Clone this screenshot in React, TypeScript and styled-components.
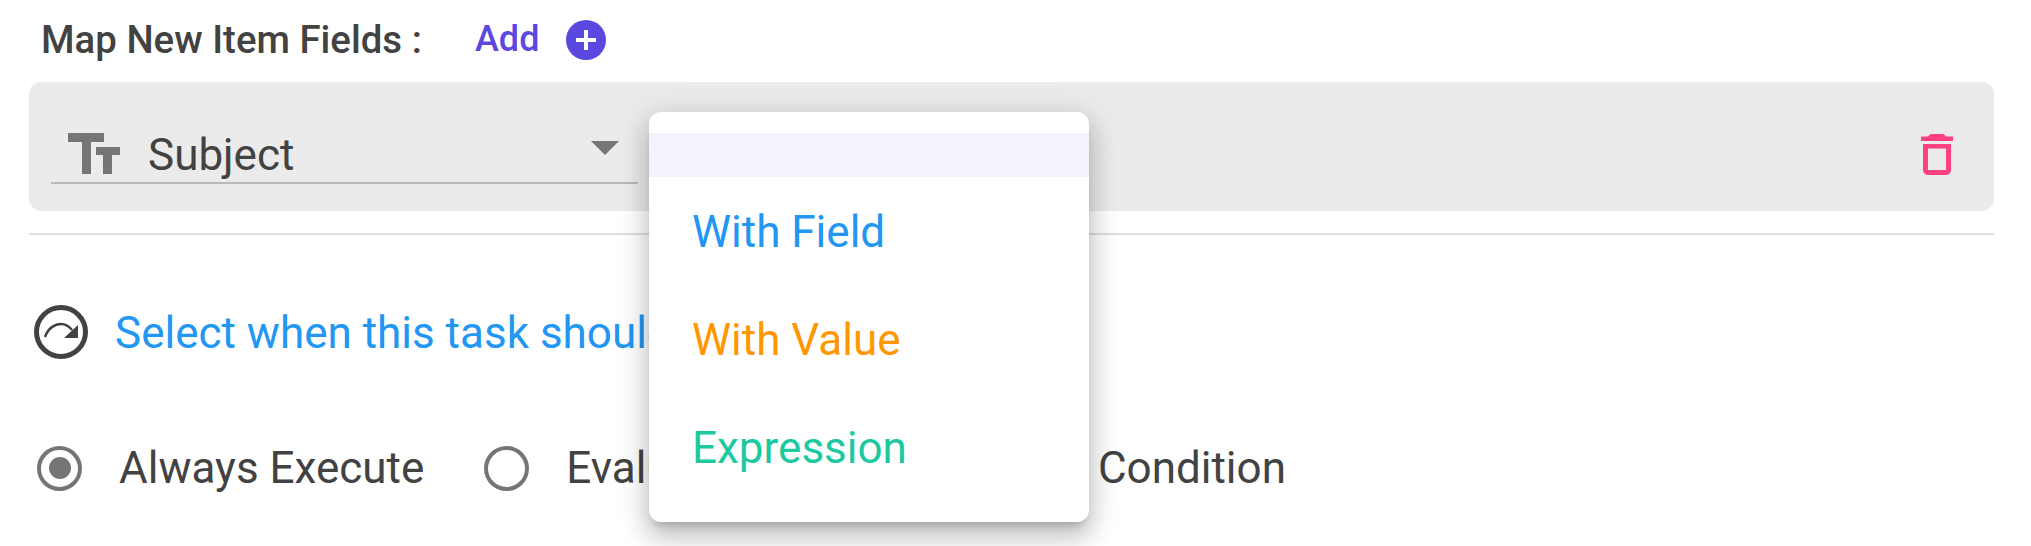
import styled, { createGlobalStyle } from "styled-components";

const GlobalStyle = createGlobalStyle`
  html, body {
    margin: 0;
    background: #fff;
  }
  body {
    font-family: Roboto, "Liberation Sans", sans-serif;
    color: #424242;
  }
`;

const menuItems = [
  { label: "With Field", color: "#2196f3" },
  { label: "With Value", color: "#ff9800" },
  { label: "Expression", color: "#1dc9a0" },
];

export default function App() {
  return (
    <Page>
      <GlobalStyle />
      <Header>
        <Title>Map New Item Fields :</Title>
        <AddLabel>Add</AddLabel>
        <AddButton>
          <svg width="40" height="40" viewBox="0 0 40 40">
            <circle cx="20" cy="20" r="20" fill="#5b48e0" />
            <path d="M20 10v20M10 20h20" stroke="#fff" strokeWidth="4" />
          </svg>
        </AddButton>
      </Header>
      <FieldPanel>
        <SelectBox>
          <svg width="52" height="41" viewBox="0 0 52 41">
            <path
              fill="#757575"
              d="M0 0h36v9H23v32h-9V9H0zM28 14h24v8h-8v19h-9V22h-7z"
            />
          </svg>
          <SelectValue>Subject</SelectValue>
          <SelectArrow width="28" height="14" viewBox="0 0 28 14">
            <path fill="#757575" d="M0 0h28L14 14z" />
          </SelectArrow>
        </SelectBox>
        <DeleteButton>
          <svg width="32" height="41" viewBox="0 0 32 41">
            <path
              fill="#ff4081"
              d="M9.500 0h13l2.500 2.500H32v4.500H0V2.500h7zM2 10h28v26c0 2.800-2.200 5-5 5H7c-2.800 0-5-2.200-5-5zM7 14.500V36h18V14.500z"
              fillRule="evenodd"
            />
          </svg>
        </DeleteButton>
      </FieldPanel>
      <Divider />
      <ConditionHeading>
        <svg width="54" height="54" viewBox="0 0 54 54">
          <circle cx="27" cy="27" r="24.500" fill="none" stroke="#424242" strokeWidth="5" />
          <path
            d="M11 32C14 23 21 19 27 19c4 0 8 2 11 6"
            fill="none"
            stroke="#424242"
            strokeWidth="2.500"
          />
          <path fill="#424242" d="M44 20v13H30z" />
        </svg>
        <HeadingText>Select when this task should execute</HeadingText>
      </ConditionHeading>
      <RadioRow>
        <RadioOption>
          <Radio $checked />
          <RadioLabel>Always Execute</RadioLabel>
        </RadioOption>
        <RadioOption>
          <Radio />
          <RadioLabel $tight>Evaluate Task Execution On Condition</RadioLabel>
        </RadioOption>
      </RadioRow>
      <Menu>
        <MenuBlank />
        {menuItems.map((item) => (
          <MenuItem key={item.label} $color={item.color}>
            {item.label}
          </MenuItem>
        ))}
      </Menu>
    </Page>
  );
}

const Page = styled.div`
  position: relative;
  width: 2031px;
  height: 546px;
  overflow: hidden;
  padding: 20px 37px 0 29px;
  box-sizing: border-box;
`;

const Header = styled.div`
  display: flex;
  align-items: center;
  height: 40px;
  padding-left: 12px;
  margin-bottom: 22px;
`;

const Title = styled.div`
  font-size: 38.400px;
  font-weight: 500;
  width: 434px;
  padding-bottom: 2px;
`;

const AddLabel = styled.div`
  font-size: 36px;
  font-weight: 500;
  color: #5b48e0;
  width: 91px;
  padding-bottom: 2px;
`;

const AddButton = styled.div`
  display: flex;
  width: 40px;
  height: 40px;
`;

const FieldPanel = styled.div`
  display: flex;
  align-items: flex-start;
  justify-content: space-between;
  height: 129px;
  background: #ebebeb;
  border-radius: 12px;
  padding: 50px 41px 0 22px;
  box-sizing: border-box;
`;

const SelectBox = styled.div`
  display: flex;
  align-items: center;
  width: 587px;
  height: 52px;
  box-sizing: border-box;
  padding: 0 19px 8px 17px;
  border-bottom: 2px solid #b9b9b9;
`;

const SelectValue = styled.div`
  flex: 1;
  font-size: 44px;
  margin-left: 28px;
  line-height: 41px;
  padding-top: 4px;
`;

const SelectArrow = styled.svg`
  margin-top: -10px;
`;

const DeleteButton = styled.div`
  display: flex;
  width: 32px;
  height: 41px;
  margin-top: 2px;
`;

const Divider = styled.div`
  height: 2px;
  margin-top: 22px;
  background: #dedede;
`;

const ConditionHeading = styled.div`
  display: flex;
  align-items: center;
  gap: 27px;
  margin-top: 70px;
  padding-left: 5px;
  height: 54px;
`;

const HeadingText = styled.div`
  font-size: 44px;
  color: #2196f3;
  padding-top: 2px;
`;

const RadioRow = styled.div`
  display: flex;
  gap: 60px;
  margin-top: 83px;
  padding-left: 8px;
`;

const RadioOption = styled.div`
  display: flex;
  align-items: center;
  gap: 37px;
`;

const Radio = styled.span<{ $checked?: boolean }>`
  display: flex;
  align-items: center;
  justify-content: center;
  width: 45px;
  height: 45px;
  box-sizing: border-box;
  border: 4.500px solid #757575;
  border-radius: 50%;
  &::after {
    content: "";
    display: ${({ $checked }) => ($checked ? "block" : "none")};
    width: 22px;
    height: 22px;
    border-radius: 50%;
    background: #757575;
  }
`;

const RadioLabel = styled.div<{ $tight?: boolean }>`
  font-size: 44px;
  word-spacing: ${({ $tight }) => ($tight ? "-4px" : "0")};
  white-space: nowrap;
`;

const Menu = styled.div`
  position: absolute;
  left: 649px;
  top: 112px;
  width: 440px;
  height: 410px;
  padding: 21px 0;
  box-sizing: border-box;
  background: #fff;
  border-radius: 12px;
  box-shadow:
    0 8px 10px -5px rgba(0, 0, 0, 0.2),
    0 16px 24px 2px rgba(0, 0, 0, 0.14),
    0 6px 30px 5px rgba(0, 0, 0, 0.12);
`;

const MenuBlank = styled.div`
  height: 44px;
  background: #f4f3fc;
`;

const MenuItem = styled.div<{ $color: string }>`
  display: flex;
  align-items: center;
  height: 108px;
  padding: 2px 0 0 43px;
  box-sizing: border-box;
  font-size: 44px;
  color: ${({ $color }) => $color};
`;
